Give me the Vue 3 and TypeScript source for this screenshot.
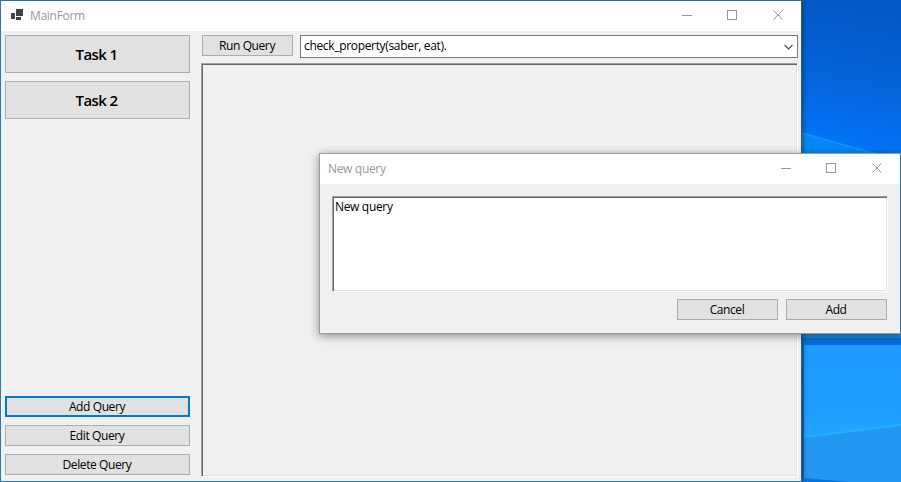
<script setup lang="ts">
import { ref } from 'vue'

const tasks = ['Task 1', 'Task 2']
const actions = ['Add Query', 'Edit Query', 'Delete Query']
const focused = ref('Add Query')
const query = ref('check_property(saber, eat).')
const draft = ref('New query')
</script>

<template>
  <div class="desktop">
    <svg class="wallpaper" width="901" height="482" viewBox="0 0 901 482">
      <defs>
        <linearGradient id="sky" x1="0.35" y1="0" x2="0.2" y2="1">
          <stop offset="0" stop-color="#0458c6" />
          <stop offset="0.5" stop-color="#0465dc" />
          <stop offset="0.85" stop-color="#0075fa" />
          <stop offset="1" stop-color="#0078ff" />
        </linearGradient>
        <linearGradient id="pane" x1="0" y1="0" x2="0" y2="1">
          <stop offset="0" stop-color="#1f9aff" />
          <stop offset="0.5" stop-color="#1f9eff" />
          <stop offset="0.75" stop-color="#22acff" />
        </linearGradient>
      </defs>
      <rect x="780" width="121" height="165" fill="url(#sky)" />
      <path d="M780 126 L901 160 V340 H780Z" fill="#0488f8" />
      <path d="M780 127 L901 161" stroke="#1292f8" stroke-width="1.5" />
      <rect x="780" y="325" width="121" height="13" fill="#188de6" />
      <rect x="780" y="338" width="121" height="7" fill="#0070e0" />
      <rect x="804" y="345" width="97" height="137" fill="url(#pane)" />
      <path d="M804 438 L901 425 V482 H804Z" fill="#2196f3" />
      <path d="M806 437 L901 425" stroke="#24b0ff" stroke-width="2" />
      <path d="M780 476 L850 482 H780Z" fill="#0873da" />
    </svg>

    <section class="window main">
      <header class="titlebar">
        <svg class="app-icon" width="12" height="11" viewBox="0 0 12 11" fill="#404040" shape-rendering="crispEdges">
          <rect x="5" y="0" width="7" height="7" />
          <rect x="0" y="4" width="4" height="6" />
          <rect x="5" y="8" width="5" height="3" />
        </svg>
        <span class="title">MainForm</span>
        <svg class="controls" width="101" height="11" viewBox="0 0 101 11" fill="none" stroke="#999">
          <path d="M0 5.5H10" />
          <rect x="45.5" y="0.5" width="9" height="9" />
          <path d="M91.5 0.5l9 9M100.5 0.5l-9 9" />
        </svg>
      </header>
      <div class="client">
        <aside class="side">
          <button v-for="t in tasks" :key="t" class="btn task">{{ t }}</button>
          <div class="spacer"></div>
          <button v-for="a in actions" :key="a" class="btn" :class="{ focus: a === focused }" @click="focused = a">{{ a }}</button>
        </aside>
        <main class="work">
          <div class="bar">
            <button class="btn run">Run Query</button>
            <div class="combo">
              <span>{{ query }}</span>
              <svg width="9" height="6" viewBox="0 0 9 6" fill="none" stroke="#444" stroke-width="1.2"><path d="M0.5 0.8l4 4 4-4" /></svg>
            </div>
          </div>
          <div class="sunken output"></div>
        </main>
      </div>
    </section>

    <section class="window dialog">
      <header class="titlebar">
        <span class="title">New query</span>
        <svg class="controls" width="101" height="11" viewBox="0 0 101 11" fill="none" stroke="#999">
          <path d="M0 5.5H10" />
          <rect x="45.5" y="0.5" width="9" height="9" />
          <path d="M91.5 0.5l9 9M100.5 0.5l-9 9" />
        </svg>
      </header>
      <div class="form">
        <div class="sunken editor"><span>{{ draft }}</span></div>
        <div class="buttons">
          <button class="btn">Cancel</button>
          <button class="btn">Add</button>
        </div>
      </div>
    </section>
  </div>
</template>

<style>
body {
  margin: 0;
  overflow: hidden;
}
</style>

<style scoped>
.desktop {
  position: relative;
  width: 901px;
  height: 482px;
  overflow: hidden;
  background: #0468e2;
  font: 12px/16px "Open Sans", "Noto Sans", sans-serif;
  letter-spacing: -0.33px;
  color: #000;
}
.wallpaper {
  display: block;
}
.window {
  position: absolute;
  box-sizing: border-box;
  display: flex;
  flex-direction: column;
  background: #f0f0f0;
}
.main {
  left: 0;
  top: 0;
  width: 802px;
  height: 482px;
  border: 1px solid #2a7ab0;
  border-top-color: #2b6ca3;
  border-right-color: #1260a8;
  box-shadow: 1px 0 5px rgba(0, 0, 0, 0.35);
}
.main .title {
  letter-spacing: -0.3px;
}
.dialog {
  left: 319px;
  top: 153px;
  width: 582px;
  height: 181px;
  border: 1px solid #999c9d;
  border-right-color: #2476ad;
  box-shadow: 0 2px 9px rgba(0, 0, 0, 0.42);
}
.titlebar {
  display: flex;
  align-items: center;
  height: 30px;
  flex: none;
  background: #fff;
  color: #999;
}
.app-icon {
  margin: 0 7px 3px 10px;
}
.dialog .title {
  margin-left: 8px;
}
.controls {
  margin-left: auto;
  margin-right: 18px;
  margin-bottom: 1px;
}
.client {
  flex: 1;
  display: flex;
  gap: 11px;
  padding: 4px 3px 4px 4px;
}
.side {
  width: 185px;
  display: flex;
  flex-direction: column;
  gap: 8px;
  padding-bottom: 2px;
}
.spacer {
  flex: 1;
}
.btn {
  box-sizing: border-box;
  height: 21px;
  padding: 1px 1px 0 0;
  border: 1px solid #adadad;
  border-radius: 0;
  background: #e1e1e1;
  color: #000;
  font: inherit;
  letter-spacing: -0.4px;
}
.btn.focus {
  border: 2px solid #0078d7;
}
.btn.task {
  height: 38px;
  padding: 0 2px 0 0;
  font-size: 15px;
  font-weight: 600;
  letter-spacing: -0.6px;
}
.work {
  flex: 1;
  display: flex;
  flex-direction: column;
  gap: 5px;
}
.bar {
  display: flex;
  gap: 7px;
  padding-left: 1px;
}
.run {
  width: 91px;
}
.combo {
  flex: 1;
  box-sizing: border-box;
  height: 23px;
  display: flex;
  align-items: center;
  justify-content: space-between;
  padding: 0 4px 0 3px;
  border: 1px solid #7a7a7a;
  background: #fff;
}
.combo span {
  padding-bottom: 1px;
}
.sunken {
  box-sizing: border-box;
  border: 1px solid;
  border-color: #a0a0a0 #fff #fff #a0a0a0;
  box-shadow: inset 1px 1px #696969, inset -1px -1px #e3e3e3;
}
.output {
  height: 414px;
}
.form {
  flex: 1;
  display: flex;
  flex-direction: column;
  gap: 7px;
  padding: 12px 12px 0;
}
.editor {
  height: 96px;
  padding: 2px;
  background: #fff;
}
.buttons {
  display: flex;
  justify-content: flex-end;
  gap: 8px;
  padding-right: 1px;
}
.buttons .btn {
  width: 101px;
}
</style>
